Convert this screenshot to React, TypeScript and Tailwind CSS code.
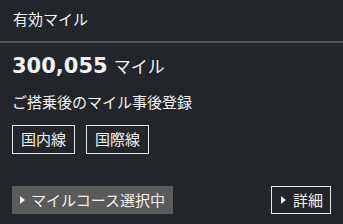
import React from "react";

const Tri = () => (
  <svg width="5" height="8" viewBox="0 0 5 8" className="shrink-0">
    <path d="M0 0 L5 4 L0 8 Z" fill="#f2f2f2" />
  </svg>
);

export default function App() {
  return (
    <div
      className="w-[343px] h-[224px] bg-[#22252a] text-[#f2f2f2] flex flex-col"
      style={{ fontFamily: '"Noto Sans CJK JP", "Noto Sans", sans-serif' }}
    >
      <div className="h-[41px] px-[13px] pt-[5px] text-[15px] leading-[28px]">有効マイル</div>
      <div className="h-[2px] bg-[#4d545c]" />
      <div className="px-[12px] pt-[10px] flex flex-col">
        <div className="flex items-baseline gap-[6px] h-[26px]">
          <span
            className="text-[21px] font-bold leading-[26px]"
            style={{ fontFamily: '"DejaVu Sans", sans-serif' }}
          >
            300,055
          </span>
          <span className="text-[17px] leading-[26px]">マイル</span>
        </div>
        <div className="mt-[12px] text-[15px] leading-[22px]">ご搭乗後のマイル事後登録</div>
        <div className="mt-[12px] flex gap-[11px]">
          <div className="h-[29px] w-[63px] border-[1.5px] border-[#e6e6e6] flex items-center justify-center text-[15px]">国内線</div>
          <div className="h-[29px] w-[63px] border-[1.5px] border-[#e6e6e6] flex items-center justify-center text-[15px]">国際線</div>
        </div>
        <div className="mt-[32px] flex justify-between">
          <div className="h-[28px] w-[161px] bg-[#5a5a5a] flex items-center gap-[6px] pl-[8px] text-[15px]">
            <Tri />
            <span>マイルコース選択中</span>
          </div>
          <div className="h-[28px] w-[60px] border-[1.5px] border-[#e6e6e6] flex items-center gap-[7px] pl-[9px] text-[15px]">
            <Tri />
            <span>詳細</span>
          </div>
        </div>
      </div>
    </div>
  );
}
